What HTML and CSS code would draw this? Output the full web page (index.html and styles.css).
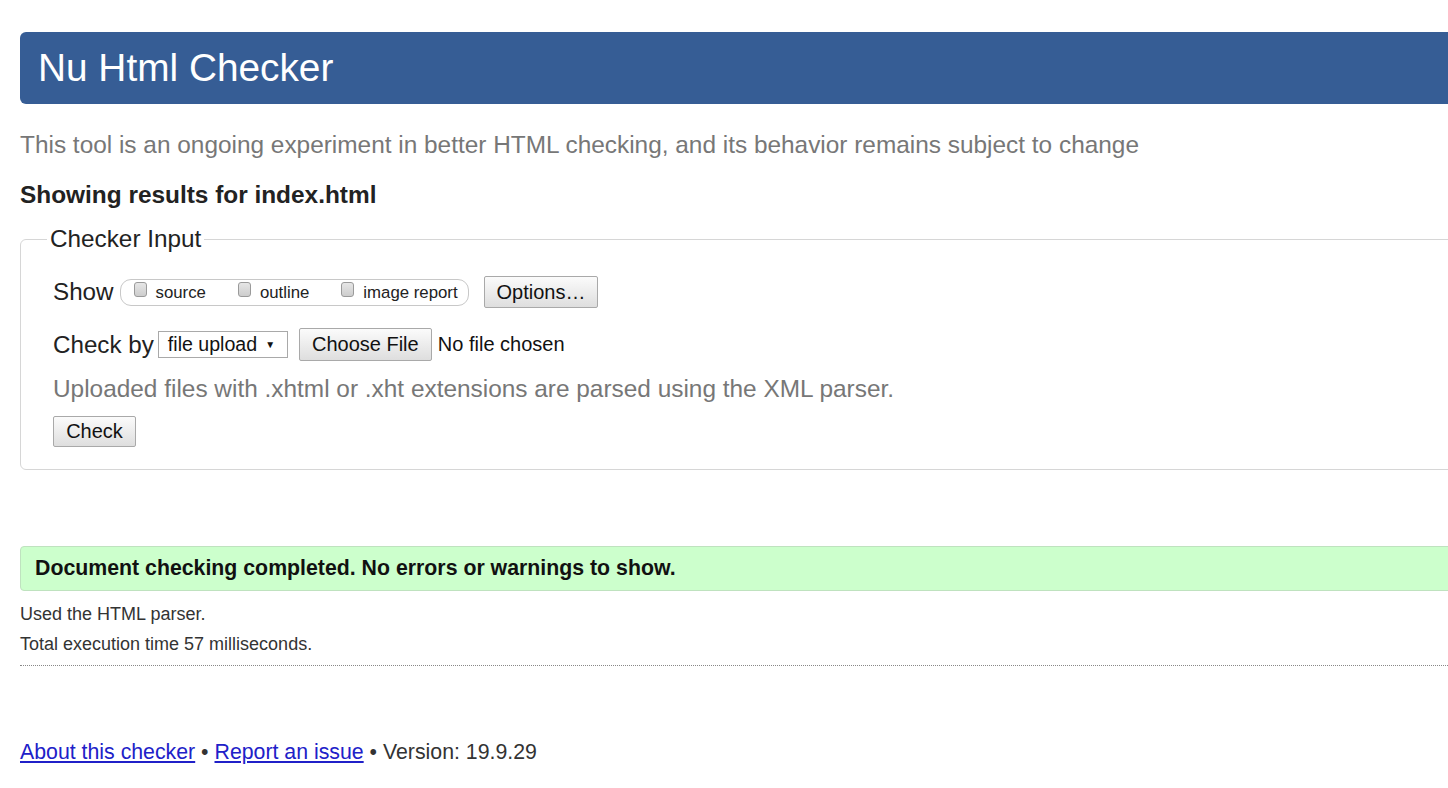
FILE: index.html
```html
<!DOCTYPE html>
<html lang="en">
<head>
<meta charset="utf-8">
<title>Nu Html Checker</title>
<link rel="stylesheet" href="styles.css">
</head>
<body>
<div class="page">
  <h1 class="banner">Nu Html Checker</h1>
  <p class="lead">This tool is an ongoing experiment in better HTML checking, and its behavior remains subject to change</p>
  <h2 class="results-for">Showing results for index.html</h2>
  <fieldset class="input-box">
    <legend class="input-legend">Checker Input</legend>
    <div class="row row-show">
      <span class="row-label">Show</span>
      <span class="toggles">
        <label class="opt"><span class="box"></span>source</label>
        <label class="opt"><span class="box"></span>outline</label>
        <label class="opt"><span class="box"></span>image report</label>
      </span>
      <button class="btn btn-options" type="button">Options…</button>
    </div>
    <div class="row row-by">
      <span class="row-label">Check by</span>
      <span class="select">file upload <span class="caret">▼</span></span>
      <button class="btn btn-file" type="button">Choose File</button>
      <span class="nofile">No file chosen</span>
    </div>
    <p class="hint">Uploaded files with .xhtml or .xht extensions are parsed using the XML parser.</p>
    <div class="row">
      <button class="btn btn-check" type="button">Check</button>
    </div>
  </fieldset>
  <div class="success">Document checking completed. No errors or warnings to show.</div>
  <div class="details">
    <p class="detail-line">Used the HTML parser.</p>
    <p class="detail-line">Total execution time 57 milliseconds.</p>
  </div>
  <p class="footer"><a class="footer-link" href="#">About this checker</a> • <a class="footer-link" href="#">Report an issue</a> • Version: 19.9.29</p>
</div>
</body>
</html>
```

FILE: styles.css
```css
html {
  overflow: hidden;
  background: #fff;
}
body {
  margin: 0;
  font-family: "Liberation Sans", Arial, sans-serif;
  color: #222;
}
.page {
  width: 1480px;
  padding: 32px 0 0 20px;
  box-sizing: border-box;
}
.banner {
  margin: 0;
  height: 72px;
  display: flex;
  align-items: center;
  padding-left: 18px;
  background: #365d95;
  color: #fff;
  font-weight: normal;
  font-size: 38.8px;
  border-radius: 6px;
}
.lead {
  margin: 26px 0 0;
  font-size: 24.4px;
  line-height: 30px;
  color: #777;
}
.results-for {
  margin: 20px 0 0;
  font-size: 24.4px;
  line-height: 30px;
  font-weight: bold;
  color: #222;
}
.input-box {
  margin: 14px 0 0;
  padding: 0 0 22px 26px;
  border: 1px solid #d6d6d6;
  border-radius: 6px;
  min-width: 0;
}
.input-legend {
  padding: 0 3px;
  font-size: 24.3px;
  line-height: 30px;
  color: #222;
}
.row {
  display: flex;
  align-items: center;
  margin-left: 6px;
}
.row-show {
  margin-top: 22px;
  height: 32px;
}
.row-by {
  margin-top: 20px;
  height: 33px;
}
.row-label {
  font-size: 24.2px;
  line-height: 30px;
}
.toggles {
  display: flex;
  align-items: flex-start;
  height: 27px;
  box-sizing: border-box;
  margin-left: 6px;
  padding: 2px 10px 0 13px;
  border: 1px solid #c8c8c8;
  border-radius: 11px;
}
.opt {
  display: flex;
  align-items: flex-start;
  font-size: 16.8px;
  line-height: 22px;
  color: #222;
  margin-right: 32px;
}
.opt:last-child {
  margin-right: 0;
}
.box {
  flex: none;
  width: 13px;
  height: 15px;
  box-sizing: border-box;
  margin: 0 9px 0 0;
  border: 1px solid #9a9a9a;
  border-radius: 3px;
  background: linear-gradient(#e6e6e6, #cdcdcd);
}
.btn {
  font-family: "Liberation Sans", Arial, sans-serif;
  font-size: 20px;
  color: #111;
  padding: 0 12px;
  border: 1px solid #a9a9a9;
  border-radius: 2px;
  background: linear-gradient(#fbfbfb, #dedede);
  box-sizing: border-box;
}
.btn-options {
  margin-left: 15px;
  height: 32px;
  width: 114px;
}
.select {
  display: flex;
  align-items: center;
  margin-left: 4px;
  height: 27px;
  width: 130px;
  box-sizing: border-box;
  padding: 0 0 0 9px;
  border: 1px solid #a9a9a9;
  font-size: 19.6px;
  background: #fff;
  color: #111;
}
.caret {
  font-size: 10px;
  margin-left: 8px;
}
.btn-file {
  margin-left: 11px;
  height: 33px;
  width: 133px;
}
.nofile {
  margin-left: 6px;
  font-size: 20px;
  color: #111;
}
.hint {
  margin: 14px 0 0 6px;
  font-size: 24.4px;
  line-height: 28px;
  color: #777;
}
.btn-check {
  margin-top: 13px;
  height: 31px;
  width: 83px;
}
.success {
  margin-top: 76px;
  height: 45px;
  box-sizing: border-box;
  display: flex;
  align-items: center;
  padding-left: 14px;
  background: #ccffcc;
  border: 1px solid #bfe2bf;
  border-radius: 4px;
  font-size: 21.3px;
  font-weight: bold;
  color: #111;
}
.details {
  margin-top: 8px;
  padding-bottom: 6px;
  border-bottom: 1px dotted #888;
}
.detail-line {
  margin: 0;
  font-size: 18px;
  line-height: 30px;
  color: #333;
}
.footer {
  margin: 71px 0 0;
  font-size: 21.3px;
  line-height: 30px;
  color: #333;
}
.footer-link {
  color: #2020c8;
  text-decoration: underline;
}
```
